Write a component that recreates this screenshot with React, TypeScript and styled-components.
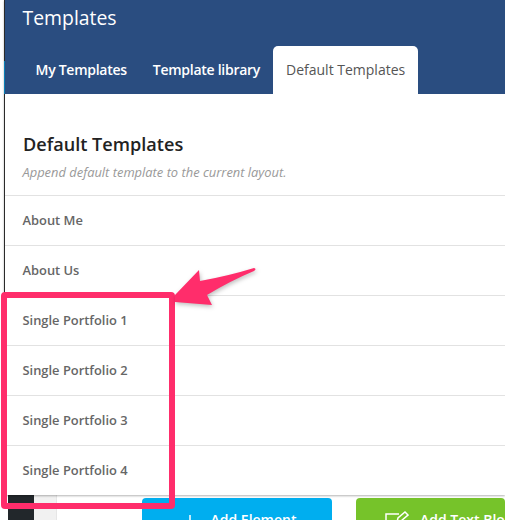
import { createGlobalStyle, styled } from "styled-components";

const GlobalStyle = createGlobalStyle`
    html, body {
        margin: 0;
        padding: 0;
        background: #fff;
    }
    body {
        font-family: "Open Sans", "Liberation Sans", sans-serif;
        width: 505px;
        height: 520px;
        overflow: hidden;
    }
`;

const Page = styled.div`
    position: relative;
    width: 505px;
    height: 520px;
    overflow: hidden;
    background: #fff;
`;

const Modal = styled.div`
    margin-left: 4px;
    height: 495px;
    border-left: 1px solid #2a2a2a;
    box-shadow: 0 1px 2px rgba(0, 0, 0, 0.3);
    box-sizing: border-box;
    display: flex;
    flex-direction: column;
    background: #fff;
    position: relative;
`;

const Header = styled.div`
    position: relative;
    height: 94px;
    flex: none;
    background: #2a4d80;
    display: flex;
    flex-direction: column;
    justify-content: space-between;

    &::after {
        content: "";
        position: absolute;
        left: -1px;
        top: 61px;
        width: 1px;
        height: 33px;
        background: #0a7fb5;
    }
`;

const Title = styled.div`
    color: #fff;
    font-size: 19.4px;
    line-height: 26px;
    padding: 5px 0 0 17.5px;
`;

const Tabs = styled.div`
    display: flex;
    padding-left: 17.5px;
    height: 48px;
`;

const Tab = styled.div<{ $active?: boolean }>`
    padding: 0 13px;
    border-radius: 5px 5px 0 0;
    font-size: 14px;
    font-weight: ${p => (p.$active ? 400 : 600)};
    line-height: 48px;
    letter-spacing: ${p => (p.$active ? "0" : "-0.27px")};
    color: ${p => (p.$active ? "#555" : "#fff")};
    background: ${p => (p.$active ? "#fff" : "transparent")};
`;

const Intro = styled.div`
    height: 101px;
    flex: none;
    box-sizing: border-box;
    padding: 38px 0 0 18px;
`;

const Heading = styled.h2`
    margin: 0;
    font-size: 18.1px;
    font-weight: 600;
    line-height: 24px;
    color: #222;
`;

const Subtitle = styled.p`
    margin: 7px 0 0 -0.5px;
    font-size: 12.9px;
    font-style: italic;
    line-height: 18px;
    color: #999;
`;

const Row = styled.div`
    height: 50px;
    box-sizing: border-box;
    border-top: 1px solid #e2e2e2;
    padding-left: 17.5px;
    font-size: 12.9px;
    font-weight: 600;
    line-height: 49px;
    color: #666;
`;

const Footer = styled.div`
    display: flex;
    height: 25px;
`;

const DarkBlock = styled.div`
    margin-left: 8px;
    width: 26px;
    background: #22272b;
`;

const GreyBlock = styled.div`
    width: 22px;
    background: #f1f1f1;
    border-right: 1px solid #e6e6e6;
`;

const FooterButton = styled.div<{ $color: string; $width: number; $left: number }>`
    margin: 3px 0 0 ${p => p.$left}px;
    width: ${p => p.$width}px;
    flex: none;
    box-sizing: border-box;
    border-radius: 4px 4px 0 0;
    background: ${p => p.$color};
    color: #fff;
    font-size: 14px;
    font-weight: 600;
    line-height: 44px;
    display: flex;
    justify-content: center;
    gap: 13px;
    padding-left: 4px;
    white-space: nowrap;
    overflow: hidden;
`;

const GreenButton = styled(FooterButton)`
    justify-content: flex-start;
    gap: 11px;
    padding-left: 29px;
`;

const ButtonIcon = styled.svg<{ $top: number }>`
    flex: none;
    margin-top: ${p => p.$top}px;
`;

const Highlight = styled.div`
    position: absolute;
    left: 1px;
    top: 292px;
    width: 174px;
    height: 217px;
    box-sizing: border-box;
    border: 6.5px solid #ff2d6b;
    border-radius: 4px;
`;

const Arrow = styled.svg`
    position: absolute;
    left: 170px;
    top: 262px;
    filter: drop-shadow(1px 2px 2px rgba(0, 0, 0, 0.25));
`;

const rows = [
    "About Me",
    "About Us",
    "Single Portfolio 1",
    "Single Portfolio 2",
    "Single Portfolio 3",
    "Single Portfolio 4",
];

export default function App() {
    return (
        <Page>
            <GlobalStyle />
            <Modal>
                <Header>
                    <Title>Templates</Title>
                    <Tabs>
                        <Tab>My Templates</Tab>
                        <Tab>Template library</Tab>
                        <Tab $active>Default Templates</Tab>
                    </Tabs>
                </Header>
                <Intro>
                    <Heading>Default Templates</Heading>
                    <Subtitle>Append default template to the current layout.</Subtitle>
                </Intro>
                {rows.map(name => (
                    <Row key={name}>{name}</Row>
                ))}
            </Modal>
            <Footer>
                <DarkBlock />
                <GreyBlock />
                <FooterButton $color="#00aeef" $width={190} $left={85}>
                    <ButtonIcon $top={17} width="16" height="16" viewBox="0 0 16 16">
                        <path d="M8 0v16M0 8h16" stroke="#fff" strokeWidth="1.5" fill="none" />
                    </ButtonIcon>
                    Add Element
                </FooterButton>
                <GreenButton $color="#76c32a" $width={149} $left={24}>
                    <ButtonIcon $top={13} width="24" height="18" viewBox="0 0 24 18">
                        <path d="M14 3H1v15h16V10M12 11l1-4 7-6 3 3-7 6z" stroke="#fff" strokeWidth="1.5" fill="none" />
                    </ButtonIcon>
                    Add Text Block
                </GreenButton>
            </Footer>
            <Highlight />
            <Arrow width="90" height="50" viewBox="0 0 90 50">
                <path d="M5 33 L29 8 L30 19 Q58 14 84 6 Q87 7 84 9 Q60 19 37 33 L42 43 L5 40 Z" fill="#ff2d6b" />
            </Arrow>
        </Page>
    );
}
